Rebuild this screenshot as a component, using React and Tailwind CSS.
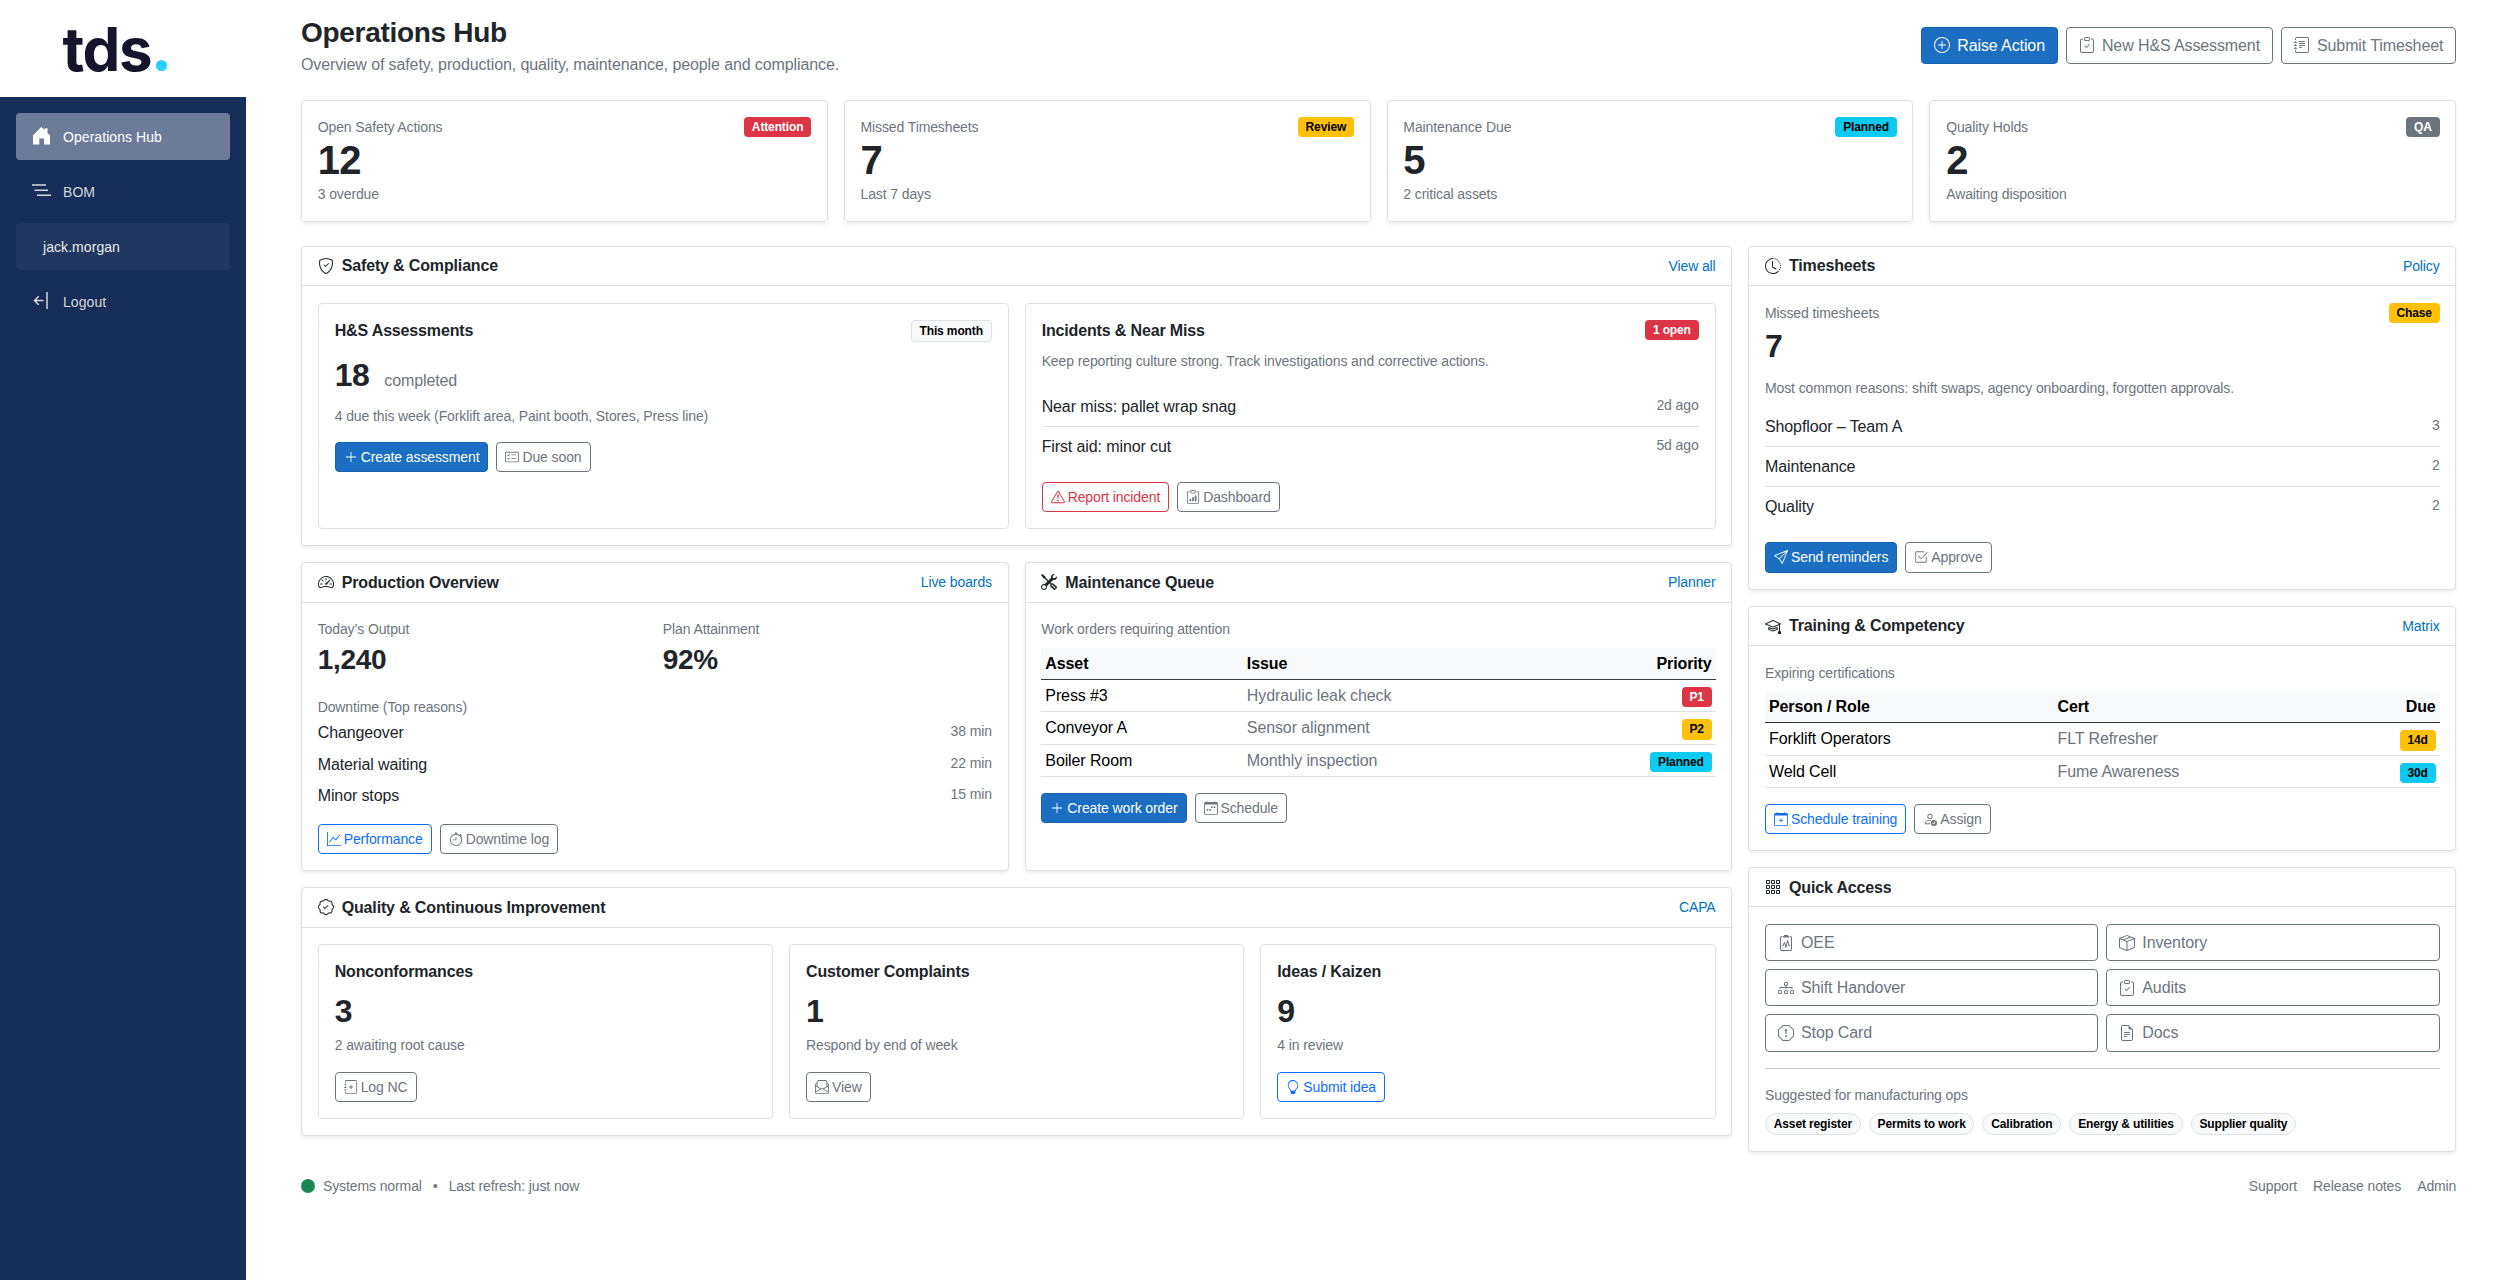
import React from "react";
import {
  BsShieldCheck, BsPlusCircle, BsClipboardCheck, BsJournalText, BsPlusLg, BsCardChecklist,
  BsExclamationTriangle, BsClipboardData, BsClockHistory, BsSend, BsCheck2Square, BsSpeedometer2, BsTools,
  BsGraphUp, BsStopwatch, BsCalendarWeek, BsMortarboard, BsCalendarPlus, BsPersonCheck, BsGrid3X3Gap,
  BsClipboard2Pulse, BsBoxSeam, BsDiagram3, BsExclamationOctagon, BsFileEarmarkText, BsPatchCheck,
  BsJournalPlus, BsEnvelopePaper, BsLightbulb, BsCircleFill,
} from "react-icons/bs";

const BADGE = {
  red: "bg-[#dc3545] text-white",
  yellow: "bg-[#ffc107] text-black",
  cyan: "bg-[#0dcaf0] text-black",
  gray: "bg-[#6c757d] text-white",
  light: "bg-[#f8f9fa] text-black border border-[#dee2e6]",
};

const Badge = ({ tone, pill, children }) => (
  <span className={`inline-block shrink-0 px-[7.8px] py-[4.2px] text-xs leading-3 font-bold tracking-[-0.13px] whitespace-nowrap ${pill ? "rounded-full" : "rounded-[4px]"} ${BADGE[tone]}`}>
    {children}
  </span>
);

const BTN = {
  primary: "bg-[#1b6ec2] border-[#1861ac] text-white",
  secondary: "border-[#6c757d] text-[#6c757d]",
  blue: "border-[#0d6efd] text-[#0d6efd]",
  danger: "border-[#dc3545] text-[#dc3545]",
};

const SmallBtn = ({ icon: Icon, tone = "secondary", children }) => (
  <a className={`inline-flex h-[30.3px] items-center gap-[3px] rounded-[4px] border px-2 text-sm whitespace-nowrap ${BTN[tone]}`}>
    <Icon size={14} className="shrink-0" />
    <span>{children}</span>
  </a>
);

const Btn = ({ icon: Icon, tone = "secondary", children }) => (
  <a className={`flex h-[37.2px] items-center gap-[7px] rounded-[4px] border px-3 whitespace-nowrap ${BTN[tone]}`}>
    <Icon size={16} className="shrink-0" />
    <span>{children}</span>
  </a>
);

const Small = ({ className = "", children }) => (
  <div className={`text-sm leading-[20.3px] text-[#6c757d] ${className}`}>{children}</div>
);

const Card = ({ icon: Icon, title, link, className = "", children }) => (
  <section className={`rounded-[4px] border border-[#e0e0e0] bg-white shadow-[0_2px_4px_rgba(0,0,0,0.075)] ${className}`}>
    <header className="flex h-[39.6px] items-center justify-between border-b border-[#e0e0e0] px-[15.700px]">
      <div className="flex items-center gap-2 font-bold tracking-[-0.15px]">
        <Icon size={16} />
        <span>{title}</span>
      </div>
      {link && <a className="text-sm text-[#0071c1]">{link}</a>}
    </header>
    <div className="px-[15.700px] pt-[16.5px] pb-4">{children}</div>
  </section>
);

const Inner = ({ title, badge, children }) => (
  <div className="rounded-[4px] border border-[#dee2e6] p-4">
    <div className="flex h-[28px] items-start justify-between">
      <h3 className="leading-[22px] font-bold tracking-[-0.15px]">{title}</h3>
      {badge}
    </div>
    {children}
  </div>
);

const List = ({ rows, lined }) => (
  <ul>
    {rows.map(([a, b], i) => (
      <li key={a} className={`flex justify-between ${lined ? "py-2" : "h-[31.6px] py-1"} ${lined && i < rows.length - 1 ? "border-b border-[#dfe2e5]" : ""}`}>
        <span>{a}</span>
        <span className="text-sm leading-[20.3px] text-[#6c757d]">{b}</span>
      </li>
    ))}
  </ul>
);

const Table = ({ head, rows, first, second }) => (
  <table className="mt-2 mb-[15.5px] w-full table-fixed border-collapse text-black">
    <thead>
      <tr className="h-[31.6px] border-b border-[#373b3e] bg-[#f8f9fa]">
        <th className={`px-1 text-left ${first}`}>{head[0]}</th>
        <th className={`px-1 text-left ${second}`}>{head[1]}</th>
        <th className="px-1 text-right">{head[2]}</th>
      </tr>
    </thead>
    <tbody>
      {rows.map(([a, b, c, tone]) => (
        <tr key={a} className="h-[32.5px] border-b border-[#dee2e6]">
          <td className="px-1">{a}</td>
          <td className="px-1 text-[#6c757d]">{b}</td>
          <td className="px-1">
            <div className="flex justify-end pt-[3px]"><Badge tone={tone}>{c}</Badge></div>
          </td>
        </tr>
      ))}
    </tbody>
  </table>
);

const kpis = [
  ["Open Safety Actions", "12", "3 overdue", "Attention", "red"],
  ["Missed Timesheets", "7", "Last 7 days", "Review", "yellow"],
  ["Maintenance Due", "5", "2 critical assets", "Planned", "cyan"],
  ["Quality Holds", "2", "Awaiting disposition", "QA", "gray"],
];

const quality = [
  ["Nonconformances", "3", "2 awaiting root cause", "Log NC", BsJournalPlus, "secondary"],
  ["Customer Complaints", "1", "Respond by end of week", "View", BsEnvelopePaper, "secondary"],
  ["Ideas / Kaizen", "9", "4 in review", "Submit idea", BsLightbulb, "blue"],
];

const quick = [
  ["OEE", BsClipboard2Pulse], ["Inventory", BsBoxSeam], ["Shift Handover", BsDiagram3],
  ["Audits", BsClipboardCheck], ["Stop Card", BsExclamationOctagon], ["Docs", BsFileEarmarkText],
];

const Sidebar = () => (
  <aside className="flex w-[246px] shrink-0 flex-col bg-[#162d5a]">
    <div className="flex h-[97px] items-start bg-white pt-[7px] pl-[62.500px]">
      <div className="flex items-baseline font-['Inter'] text-[60px] leading-[84px] font-bold tracking-[-1.3px] text-[#14142b]">
        tds<span className="ml-[5px] inline-block size-[11px] rounded-full bg-[#27d0fb]" />
      </div>
    </div>
    <nav className="flex flex-col gap-2 px-4 pt-4 text-sm tracking-[0.06px] text-[#d7d7d7]">
      <a className="flex h-[47px] items-center rounded-[4px] bg-[#6e7b98] pl-4 text-white">
        <svg width="19" height="19" viewBox="0 0 19 19" className="mr-3" fill="currentColor">
          <path d="M1 8.200 9.300 0l3.200 3V1.200h3v4.700L18 8.200V17.500h-6v-6H7.300v6H1z" />
        </svg>
        Operations Hub
      </a>
      <a className="flex h-[47px] items-center pl-4">
        <svg width="19" height="19" viewBox="0 0 19 19" className="mr-3" stroke="currentColor" strokeWidth="1.5">
          <path d="M0 3h14M2.500 8.300H16M5 13.200h14" />
        </svg>
        BOM
      </a>
      <a className="flex h-[47px] items-center rounded-[4px] bg-[#213762] pl-[27px] text-[#ebebeb]">jack.morgan</a>
      <a className="flex h-[47px] items-center pl-4">
        <svg width="19" height="19" viewBox="0 0 19 19" className="mr-3" fill="none" stroke="currentColor" strokeWidth="1.5">
          <path d="M15 0v17M11.500 8.500H3M6.700 4.300 2.500 8.500l4.200 4.200" />
        </svg>
        Logout
      </a>
    </nav>
  </aside>
);

export default function App() {
  return (
    <div className="flex h-[1280px] w-[2500px] bg-white font-['Liberation_Sans',sans-serif] text-base leading-[23.2px] text-[#212529]">
      <Sidebar />
      <main className="ml-[55px] w-[2155.300px] pt-4 tracking-[-0.11px]">
        <div className="mb-6 flex items-start justify-between">
          <div>
            <h1 className="mb-[3.5px] text-[28px] leading-[33.6px] font-bold tracking-[-0.3px]">Operations Hub</h1>
            <p className="text-[#6c757d]">Overview of safety, production, quality, maintenance, people and compliance.</p>
          </div>
          <div className="mt-[10.600px] flex gap-2">
            <Btn icon={BsPlusCircle} tone="primary">Raise Action</Btn>
            <Btn icon={BsClipboardCheck}>New H&amp;S Assessment</Btn>
            <Btn icon={BsJournalText}>Submit Timesheet</Btn>
          </div>
        </div>

        <div className="mb-[23.500px] grid grid-cols-4 gap-4">
          {kpis.map(([label, value, sub, badge, tone]) => (
            <div key={label} className="flex h-[122px] items-start justify-between rounded-[4px] border border-[#e0e0e0] px-[15.700px] pt-[15.700px] shadow-[0_2px_4px_rgba(0,0,0,0.075)]">
              <div>
                <Small>{label}</Small>
                <div className="text-[40px] leading-[46.800px] font-bold tracking-[-0.8px]">{value}</div>
                <Small>{sub}</Small>
              </div>
              <Badge tone={tone}>{badge}</Badge>
            </div>
          ))}
        </div>

        <div className="flex items-start gap-4">
          <div className="flex w-[1431.3px] flex-col gap-4">
            <Card icon={BsShieldCheck} title="Safety & Compliance" link="View all">
              <div className="grid grid-cols-2 gap-4">
                <Inner title="H&S Assessments" badge={<Badge tone="light">This month</Badge>}>
                  <div className="mt-2 flex h-[38.4px] items-baseline gap-[15px]">
                    <span className="text-[32px] leading-[38.4px] font-bold tracking-[-0.5px]">18</span>
                    <span className="text-[#6c757d]">completed</span>
                  </div>
                  <Small className="mt-[11.500px] mb-4">4 due this week (Forklift area, Paint booth, Stores, Press line)</Small>
                  <div className="flex gap-2">
                    <SmallBtn icon={BsPlusLg} tone="primary">Create assessment</SmallBtn>
                    <SmallBtn icon={BsCardChecklist}>Due soon</SmallBtn>
                  </div>
                </Inner>
                <Inner title="Incidents & Near Miss" badge={<Badge tone="red">1 open</Badge>}>
                  <Small className="mt-[3.2px] mb-[15.5px]">Keep reporting culture strong. Track investigations and corrective actions.</Small>
                  <List lined rows={[["Near miss: pallet wrap snag", "2d ago"], ["First aid: minor cut", "5d ago"]]} />
                  <div className="mt-[15.6px] flex gap-2">
                    <SmallBtn icon={BsExclamationTriangle} tone="danger">Report incident</SmallBtn>
                    <SmallBtn icon={BsClipboardData}>Dashboard</SmallBtn>
                  </div>
                </Inner>
              </div>
            </Card>

            <div className="grid grid-cols-2 gap-4">
              <Card icon={BsSpeedometer2} title="Production Overview" link="Live boards">
                <div className="grid grid-cols-2 gap-4">
                  {[["Today’s Output", "1,240"], ["Plan Attainment", "92%"]].map(([a, b]) => (
                    <div key={a}>
                      <Small>{a}</Small>
                      <div className="mt-[3.7px] text-[28px] leading-[33.6px] font-bold tracking-[-0.3px]">{b}</div>
                    </div>
                  ))}
                </div>
                <Small className="mt-5">Downtime (Top reasons)</Small>
                <List rows={[["Changeover", "38 min"], ["Material waiting", "22 min"], ["Minor stops", "15 min"]]} />
                <div className="mt-[11.800px] flex gap-2">
                  <SmallBtn icon={BsGraphUp} tone="blue">Performance</SmallBtn>
                  <SmallBtn icon={BsStopwatch}>Downtime log</SmallBtn>
                </div>
              </Card>
              <Card icon={BsTools} title="Maintenance Queue" link="Planner">
                <Small>Work orders requiring attention</Small>
                <Table
                  head={["Asset", "Issue", "Priority"]}
                  first="w-[201.500px]"
                  second="w-[330px]"
                  rows={[
                    ["Press #3", "Hydraulic leak check", "P1", "red"],
                    ["Conveyor A", "Sensor alignment", "P2", "yellow"],
                    ["Boiler Room", "Monthly inspection", "Planned", "cyan"],
                  ]}
                />
                <div className="flex gap-2">
                  <SmallBtn icon={BsPlusLg} tone="primary">Create work order</SmallBtn>
                  <SmallBtn icon={BsCalendarWeek}>Schedule</SmallBtn>
                </div>
              </Card>
            </div>

            <Card icon={BsPatchCheck} title="Quality & Continuous Improvement" link="CAPA">
              <div className="grid grid-cols-3 gap-4">
                {quality.map(([title, value, sub, action, icon, tone]) => (
                  <Inner key={title} title={title}>
                    <div className="mt-[3.2px] text-[32px] leading-[38.4px] font-bold tracking-[-0.5px]">{value}</div>
                    <Small className="mt-[4.300px] mb-[16.5px]">{sub}</Small>
                    <div className="flex"><SmallBtn icon={icon} tone={tone}>{action}</SmallBtn></div>
                  </Inner>
                ))}
              </div>
            </Card>
          </div>

          <div className="flex flex-1 flex-col gap-4">
            <Card icon={BsClockHistory} title="Timesheets" link="Policy">
              <div className="flex items-start justify-between">
                <div>
                  <Small>Missed timesheets</Small>
                  <div className="mt-1 text-[32px] leading-[38.4px] font-bold">7</div>
                </div>
                <Badge tone="yellow">Chase</Badge>
              </div>
              <Small className="mt-[12.800px] mb-2">Most common reasons: shift swaps, agency onboarding, forgotten approvals.</Small>
              <List lined rows={[["Shopfloor – Team A", "3"], ["Maintenance", "2"], ["Quality", "2"]]} />
              <div className="mt-4 flex gap-2">
                <SmallBtn icon={BsSend} tone="primary">Send reminders</SmallBtn>
                <SmallBtn icon={BsCheck2Square}>Approve</SmallBtn>
              </div>
            </Card>

            <Card icon={BsMortarboard} title="Training & Competency" link="Matrix">
              <Small>Expiring certifications</Small>
              <Table
                head={["Person / Role", "Cert", "Due"]}
                first="w-[288.500px]"
                second="w-[300px]"
                rows={[
                  ["Forklift Operators", "FLT Refresher", "14d", "yellow"],
                  ["Weld Cell", "Fume Awareness", "30d", "cyan"],
                ]}
              />
              <div className="flex gap-2">
                <SmallBtn icon={BsCalendarPlus} tone="blue">Schedule training</SmallBtn>
                <SmallBtn icon={BsPersonCheck}>Assign</SmallBtn>
              </div>
            </Card>

            <Card icon={BsGrid3X3Gap} title="Quick Access">
              <div className="grid grid-cols-2 gap-2">
                {quick.map(([label, icon]) => <Btn key={label} icon={icon}>{label}</Btn>)}
              </div>
              <hr className="my-4 border-[#c8c9ca]" />
              <Small>Suggested for manufacturing ops</Small>
              <div className="mt-2 flex gap-2">
                {["Asset register", "Permits to work", "Calibration", "Energy & utilities", "Supplier quality"].map((t) => (
                  <Badge key={t} tone="light" pill>{t}</Badge>
                ))}
              </div>
            </Card>
          </div>
        </div>

        <footer className="mt-[23.500px] flex justify-between text-sm leading-[20.3px] text-[#6c757d]">
          <div className="flex items-center">
            <BsCircleFill size={14} className="mr-2 text-[#198754]" />
            <span>Systems normal</span>
            <span className="mx-[11px]">•</span>
            <span>Last refresh: just now</span>
          </div>
          <div className="flex gap-4">
            <a>Support</a>
            <a>Release notes</a>
            <a>Admin</a>
          </div>
        </footer>
      </main>
    </div>
  );
}
